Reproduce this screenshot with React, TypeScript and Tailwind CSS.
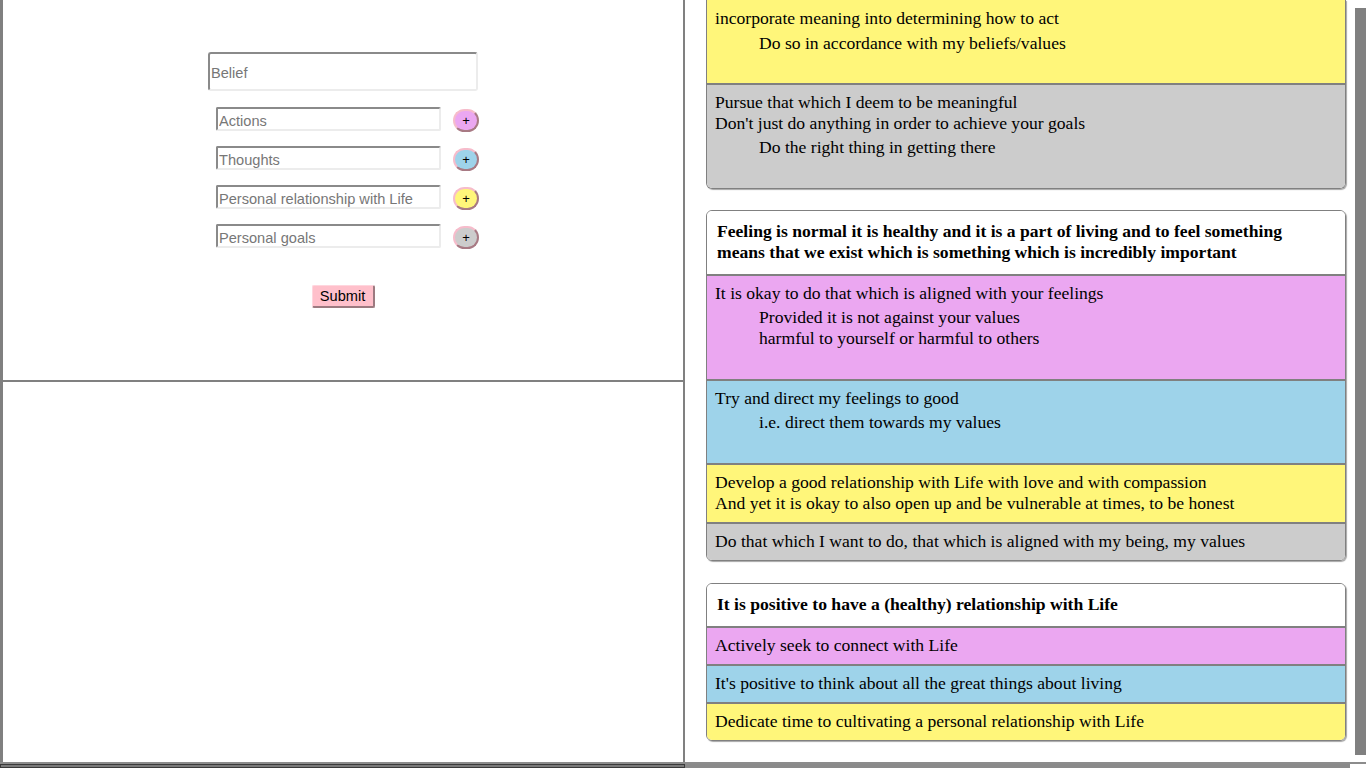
import React from "react";

type SectionProps = {
  color: string;
  lines: string[];
  indented?: string[];
  first?: boolean;
};

function Section({ color, lines, indented, first }: SectionProps) {
  return (
    <div
      className={`${color} ${first ? "pt-[8px]" : "border-t-2 border-[#808080] pt-[7px]"} pl-[8px] pr-[8px] pb-[8px]`}
    >
      {lines.map((l, i) => (
        <div key={i} className="leading-[21px] whitespace-nowrap">
          {l}
        </div>
      ))}
      {indented && (
        <div className={`ml-[44px] ${first ? "mt-[4px] mb-[21px]" : "mt-[3px] mb-[22px]"}`}>
          {indented.map((l, i) => (
            <div key={i} className="leading-[21px] whitespace-nowrap">
              {l}
            </div>
          ))}
        </div>
      )}
    </div>
  );
}

function Header({ children }: { children: React.ReactNode }) {
  return (
    <div className="bg-white pl-[10px] pr-[10px] pt-[10px] pb-[11px] font-bold leading-[21px]">
      {children}
    </div>
  );
}

const YELLOW = "bg-[#fff67a]";
const PINK = "bg-[#eba7f1]";
const BLUE = "bg-[#9ed3ea]";
const GRAY = "bg-[#cccccc]";

function InputRow({ placeholder, btn }: { placeholder: string; btn: string }) {
  return (
    <div className="flex items-center gap-[12px] pl-[9px] h-[24px]">
      <input
        placeholder={placeholder}
        className="w-[225px] h-[24px] border-2 border-t-[#8a8a8a] border-l-[#8a8a8a] border-b-[#ececec] border-r-[#ececec] rounded-[2px] px-px pt-[3px] pb-0 text-[14.6px] text-black placeholder:text-[#777777] outline-none bg-white"
      />
      <button
        className={`${btn} w-[26px] h-[23px] translate-y-[1px] rounded-full border-2 border-t-[#f6bccb] border-l-[#f6bccb] border-b-[#a87a84] border-r-[#a87a84] flex items-center justify-center text-[13px] leading-none text-black`}
      >
        +
      </button>
    </div>
  );
}

export default function App() {
  return (
    <div
      className="w-[1366px] h-[768px] overflow-hidden flex flex-col bg-white"
      style={{ fontFamily: '"Liberation Sans", Arial, sans-serif' }}
    >
      <div className="flex h-[762px]">
        {/* Left frame */}
        <div className="w-[685px] shrink-0 border-l-[3px] border-r-2 border-[#808080] flex flex-col">
          <div className="h-[382px] border-b-2 border-[#808080] flex flex-col items-center pt-[52px]">
            <input
              placeholder="Belief"
              className="w-[270px] h-[39px] border-2 border-t-[#8a8a8a] border-l-[#8a8a8a] border-b-[#ececec] border-r-[#ececec] rounded-[3px] px-px pt-[3px] pb-0 text-[14.6px] text-black placeholder:text-[#777777] outline-none bg-white"
            />
            <div className="mt-[16px] flex flex-col gap-[15px]">
              <InputRow placeholder="Actions" btn={PINK} />
              <InputRow placeholder="Thoughts" btn={BLUE} />
              <InputRow placeholder="Personal relationship with Life" btn={YELLOW} />
              <InputRow placeholder="Personal goals" btn={GRAY} />
            </div>
            <button className="mt-[37px] w-[63px] h-[23px] bg-[#ffc0cb] border border-t-[#ffd6de] border-l-[#ffd6de] border-b-2 border-r-2 border-b-[#9c7a80] border-r-[#9c7a80] rounded-[2px] text-[14.6px] text-black leading-none">
              Submit
            </button>
          </div>
          <div className="flex-1" />
        </div>

        {/* Right frame */}
        <div
          className="relative flex-1 overflow-hidden pl-[21px] text-[17.6px] text-black"
          style={{ fontFamily: '"Liberation Serif", "Times New Roman", serif' }}
        >
          <div className="flex flex-col w-[640px]">
            <div className="border-x border-b border-[#808080] rounded-b-[6px] overflow-hidden shadow-[1px_1px_1px_rgba(0,0,0,0.35)]">
              <Section
                first
                color={YELLOW}
                lines={["incorporate meaning into determining how to act"]}
                indented={["Do so in accordance with my beliefs/values"]}
              />
              <Section
                color={GRAY}
                lines={[
                  "Pursue that which I deem to be meaningful",
                  "Don't just do anything in order to achieve your goals",
                ]}
                indented={["Do the right thing in getting there"]}
              />
            </div>

            <div className="mt-[21px] border border-[#808080] rounded-[6px] overflow-hidden shadow-[1px_1px_1px_rgba(0,0,0,0.35)]">
              <Header>
                Feeling is normal it is healthy and it is a part of living and to feel something
                <br />
                means that we exist which is something which is incredibly important
              </Header>
              <Section
                color={PINK}
                lines={["It is okay to do that which is aligned with your feelings"]}
                indented={[
                  "Provided it is not against your values",
                  "harmful to yourself or harmful to others",
                ]}
              />
              <Section
                color={BLUE}
                lines={["Try and direct my feelings to good"]}
                indented={["i.e. direct them towards my values"]}
              />
              <Section
                color={YELLOW}
                lines={[
                  "Develop a good relationship with Life with love and with compassion",
                  "And yet it is okay to also open up and be vulnerable at times, to be honest",
                ]}
              />
              <Section
                color={GRAY}
                lines={["Do that which I want to do, that which is aligned with my being, my values"]}
              />
            </div>

            <div className="mt-[22px] border border-[#808080] rounded-[6px] overflow-hidden shadow-[1px_1px_1px_rgba(0,0,0,0.35)]">
              <Header>It is positive to have a (healthy) relationship with Life</Header>
              <Section color={PINK} lines={["Actively seek to connect with Life"]} />
              <Section color={BLUE} lines={["It's positive to think about all the great things about living"]} />
              <Section color={YELLOW} lines={["Dedicate time to cultivating a personal relationship with Life"]} />
            </div>
          </div>

          <div className="absolute right-0 top-[8px] w-[11px] h-[747px] bg-[#808080]" />
        </div>
      </div>

      {/* bottom strip */}
      <div className="h-[6px] flex border-t-2 border-[#8c8c8c]">
        <div className="w-[685px] h-full bg-[#7a7a7a] border border-[#3a3a3a]" />
        <div className="w-[665px] h-full bg-[#8a8a8a]" />
      </div>
    </div>
  );
}
